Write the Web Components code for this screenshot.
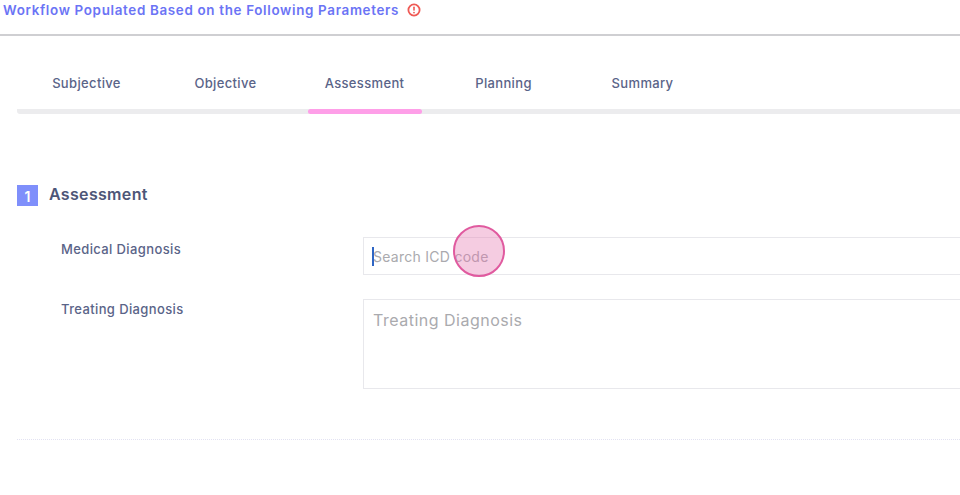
<!DOCTYPE html>
<html><head><meta charset="utf-8"><style>
html,body{margin:0;padding:0;background:#fff;overflow:hidden}
body{width:960px;height:495px;font-family:Inter,"Liberation Sans",sans-serif}
</style></head><body>
<wf-page>
<wf-header>Workflow Populated Based on the Following Parameters</wf-header>
<wf-tabs><wf-tab>Subjective</wf-tab><wf-tab>Objective</wf-tab><wf-tab active>Assessment</wf-tab><wf-tab>Planning</wf-tab><wf-tab>Summary</wf-tab></wf-tabs>
<wf-section num="1" heading="Assessment">
<wf-field label="Medical Diagnosis"><wf-input placeholder="Search ICD code" caret></wf-input><wf-click></wf-click></wf-field>
<wf-field label="Treating Diagnosis" class="second"><wf-area placeholder="Treating Diagnosis"></wf-area></wf-field>
</wf-section>
</wf-page>
<script>
function def(name,html,init){customElements.define(name,class extends HTMLElement{constructor(){super();this.attachShadow({mode:'open'}).innerHTML=typeof html==='function'?html(this):html}
connectedCallback(){if(init)init(this)}})}
def('wf-page',`<style>:host{display:block;width:960px;height:495px;overflow:hidden}</style><slot></slot>`);
def('wf-header',`<style>:host{display:flex;align-items:flex-start;height:34px;border-bottom:2px solid #cfcfd2;padding:0 0 0 3px;font:600 13.4px/20px Inter,sans-serif;letter-spacing:.67px;color:#6b74f5;gap:8px}
svg{display:block;margin-top:2.5px}</style><span><slot></slot></span>
<svg width="14" height="14" viewBox="0 0 14 14"><circle cx="7" cy="7" r="5.6" fill="none" stroke="#ef5a55" stroke-width="1.8"/><rect x="6.2" y="3.6" width="1.6" height="4.2" rx=".7" fill="#ef5a55"/><circle cx="7" cy="9.6" r=".9" fill="#ef5a55"/></svg>`);
def('wf-tabs',`<style>:host{display:flex;margin:0 0 0 17px;height:78px;box-sizing:border-box;border-bottom:5px solid #ececee;border-bottom-left-radius:3px}</style><slot></slot>`);
def('wf-tab',`<style>:host{display:flex;flex:0 0 139px;justify-content:center;position:relative;font:500 13px/20px Inter,sans-serif;letter-spacing:.35px;color:#5a6488;padding-top:37px;box-sizing:border-box;height:73px}
:host([active])::after{content:"";position:absolute;left:12.5px;width:114px;bottom:-5px;height:5px;border-radius:3px;background:#fe9fe8}</style><slot></slot>`);
def('wf-section',h=>`<style>:host{display:block;margin:0 0 0 17px;height:326px;box-sizing:border-box;border-bottom:1px dotted #e2e2f2}
.h{display:flex;align-items:flex-start;gap:11px;padding-top:71px;height:21px;font:600 16px/19px Inter,sans-serif;letter-spacing:.33px;color:#4d5678}
.n{width:21px;height:21px;background:#7f8ffb;color:#fff;font:600 14px/23px Inter,sans-serif;text-align:center;letter-spacing:0}
.b{padding:31px 0 0 44px}</style>
<div class="h"><div class="n">${h.getAttribute('num')}</div><div>${h.getAttribute('heading')}</div></div><div class="b"><slot></slot></div>`);
def('wf-field',h=>`<style>:host{display:grid;grid-template-columns:302px 620px;position:relative;margin-bottom:24px;font:500 13px/20px Inter,sans-serif;letter-spacing:.38px;color:#5a6488}
.l{padding-top:${h.classList.contains('second')?0:2}px}</style><div class="l">${h.getAttribute('label')}</div><slot></slot>`);
def('wf-input',`<style>:host{display:block;height:38px;box-sizing:border-box;border:1px solid #e8e8ec;border-right:0;position:relative;font:400 14px/38px Inter,sans-serif;letter-spacing:.27px;color:#aaaaae;padding-left:9px}
i{position:absolute;left:8px;top:9px;width:2px;height:19px;background:#2f66c4}</style><i></i>Search ICD code`);
def('wf-area',`<style>:host{display:block;height:90px;box-sizing:border-box;border:1px solid #e8e8ec;border-right:0;font:400 16px/20px Inter,sans-serif;letter-spacing:.5px;color:#aaaaae;padding:10px 9px}</style>Treating Diagnosis`);
def('wf-click',`<style>:host{position:absolute;left:392px;top:-12px;width:52px;height:52px;box-sizing:border-box;border-radius:50%;border:2px solid #e05a9f;background:rgba(228,120,175,.38)}</style>`);
</script>
</body></html>
